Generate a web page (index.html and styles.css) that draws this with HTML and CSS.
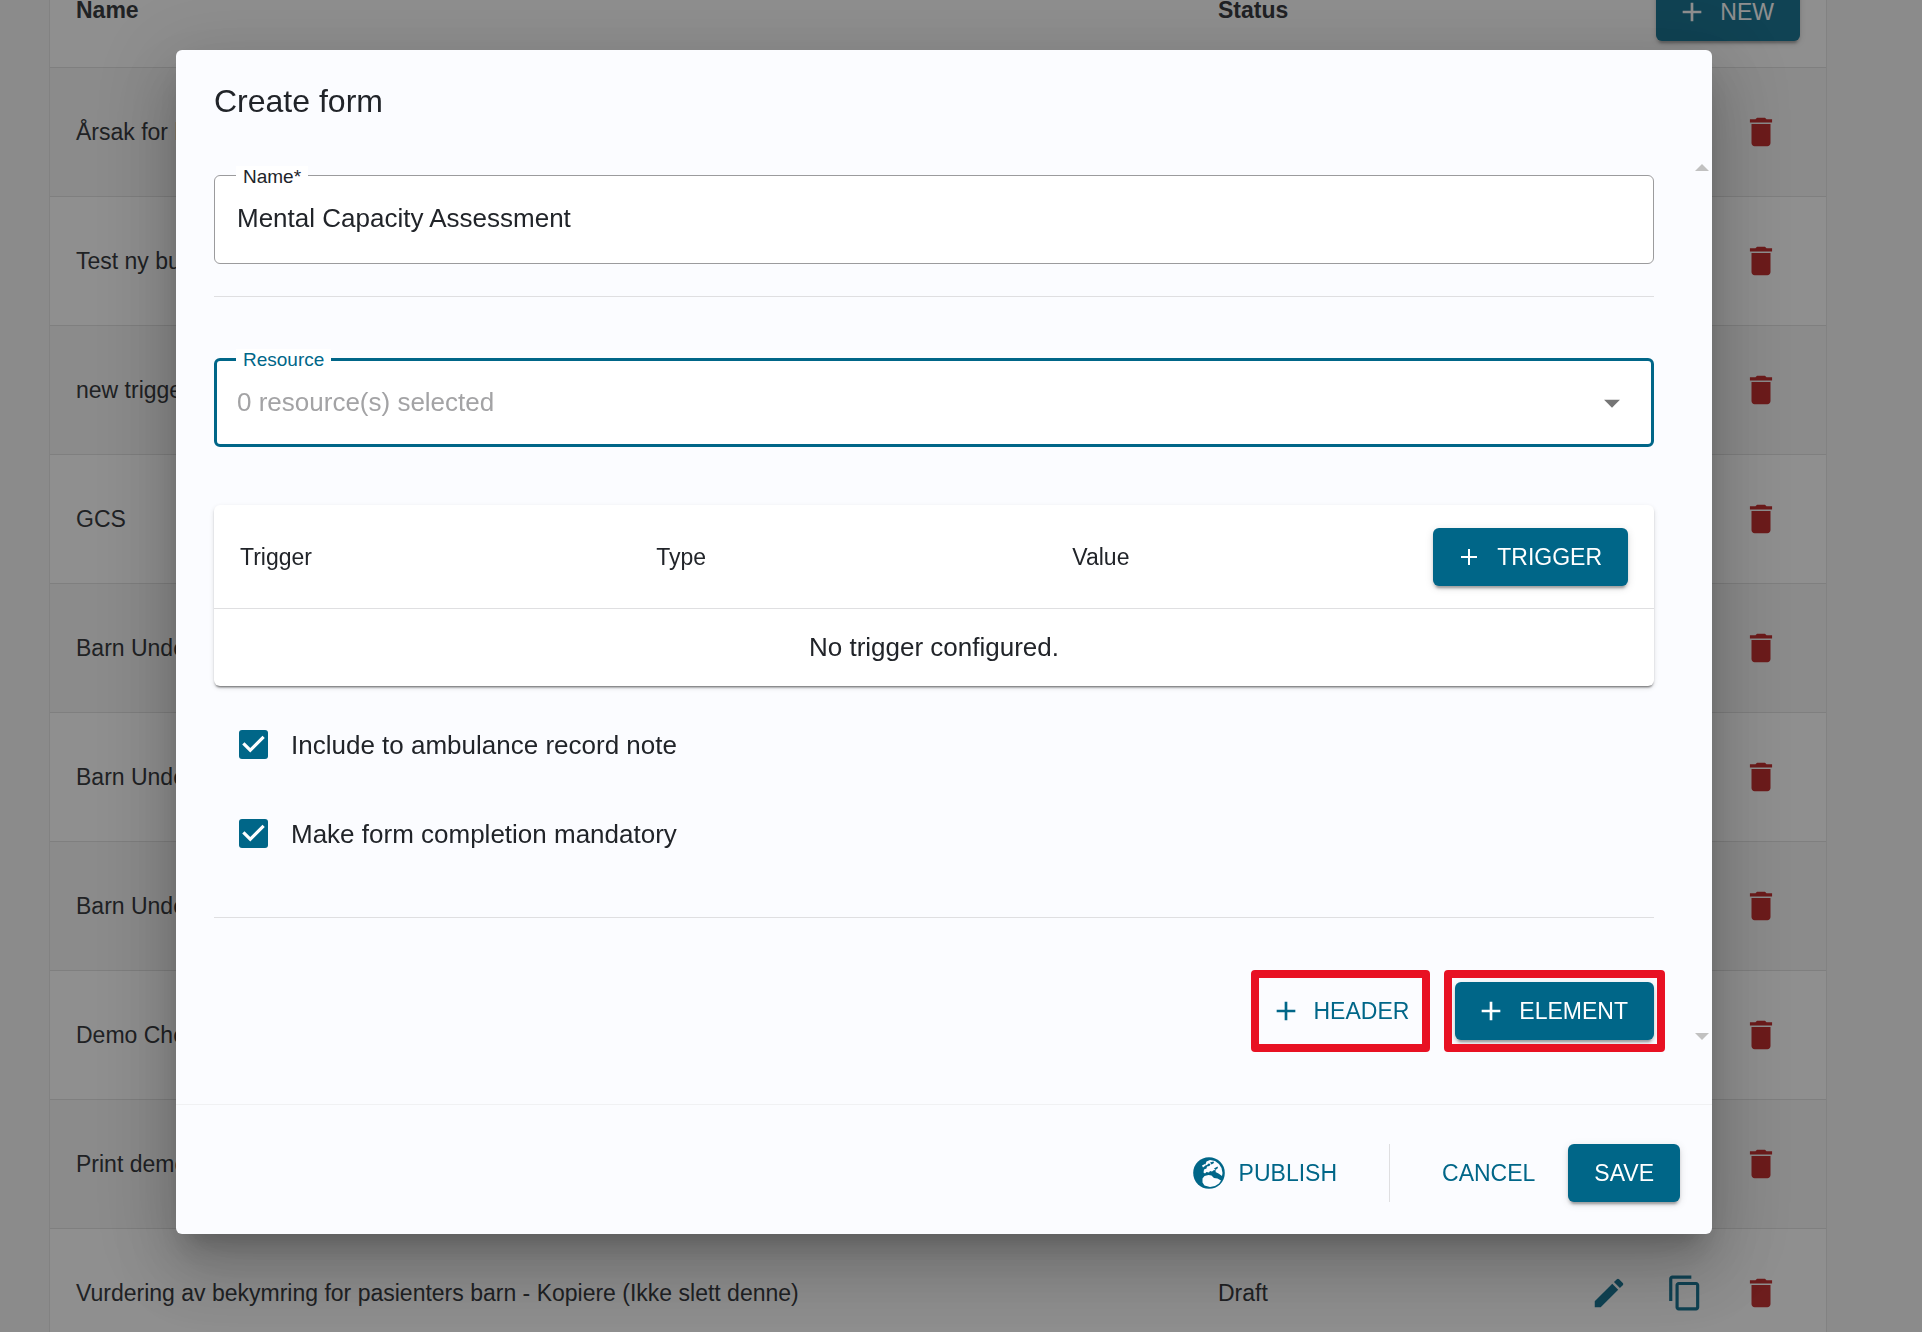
FILE: index.html
```html
<!DOCTYPE html>
<html lang="en">
<head>
<meta charset="utf-8">
<title>Create form</title>
<link rel="stylesheet" href="styles.css">
</head>
<body>
<svg class="sprite" aria-hidden="true">
  <symbol id="plus" viewBox="0 0 24 24"><path d="M19 13h-6v6h-2v-6H5v-2h6V5h2v6h6z"/></symbol>
  <symbol id="trash" viewBox="0 0 24 24"><path d="M6 19c0 1.100.9 2 2 2h8c1.100 0 2-.9 2-2V7H6zM19 4h-3.500l-1-1h-5l-1 1H5v2h14z"/></symbol>
  <symbol id="edit" viewBox="0 0 24 24"><path d="M3 17.250V21h3.750L17.810 9.940l-3.750-3.750zM20.710 7.040c.39-.39.39-1.020 0-1.410l-2.340-2.340a.996.996 0 0 0-1.410 0l-1.830 1.830 3.750 3.750z"/></symbol>
  <symbol id="copy" viewBox="0 0 24 24"><path d="M16 1H4c-1.100 0-2 .9-2 2v14h2V3h12zm3 4H8c-1.100 0-2 .9-2 2v14c0 1.100.9 2 2 2h11c1.100 0 2-.9 2-2V7c0-1.100-.9-2-2-2m0 16H8V7h11z"/></symbol>
</svg>

<main class="page">
  <table class="forms">
    <colgroup><col class="col-name"><col class="col-status"><col></colgroup>
    <thead>
      <tr><th scope="col">Name</th><th scope="col">Status</th>
      <th class="cell-new"><button class="btn btn-filled" type="button"><svg class="icon-plus"><use href="#plus"/></svg>NEW</button></th></tr>
    </thead>
    <tbody>
      <tr><td>Årsak for hendelse</td><td></td><td><div class="actions"><button type="button" class="icon-btn danger" aria-label="Delete"><svg><use href="#trash"/></svg></button></div></td></tr>
      <tr><td>Test ny build</td><td></td><td><div class="actions"><button type="button" class="icon-btn danger" aria-label="Delete"><svg><use href="#trash"/></svg></button></div></td></tr>
      <tr><td>new trigger</td><td></td><td><div class="actions"><button type="button" class="icon-btn danger" aria-label="Delete"><svg><use href="#trash"/></svg></button></div></td></tr>
      <tr><td>GCS</td><td></td><td><div class="actions"><button type="button" class="icon-btn danger" aria-label="Delete"><svg><use href="#trash"/></svg></button></div></td></tr>
      <tr><td>Barn Undersøkelse</td><td></td><td><div class="actions"><button type="button" class="icon-btn danger" aria-label="Delete"><svg><use href="#trash"/></svg></button></div></td></tr>
      <tr><td>Barn Undersøkelse</td><td></td><td><div class="actions"><button type="button" class="icon-btn danger" aria-label="Delete"><svg><use href="#trash"/></svg></button></div></td></tr>
      <tr><td>Barn Undersøkelse</td><td></td><td><div class="actions"><button type="button" class="icon-btn danger" aria-label="Delete"><svg><use href="#trash"/></svg></button></div></td></tr>
      <tr><td>Demo Checklist</td><td></td><td><div class="actions"><button type="button" class="icon-btn danger" aria-label="Delete"><svg><use href="#trash"/></svg></button></div></td></tr>
      <tr><td>Print demo</td><td></td><td><div class="actions"><button type="button" class="icon-btn danger" aria-label="Delete"><svg><use href="#trash"/></svg></button></div></td></tr>
      <tr><td>Vurdering av bekymring for pasienters barn - Kopiere (Ikke slett denne)</td><td>Draft</td><td><div class="actions"><button type="button" class="icon-btn" aria-label="Edit"><svg><use href="#edit"/></svg></button><button type="button" class="icon-btn" aria-label="Copy"><svg><use href="#copy"/></svg></button><button type="button" class="icon-btn danger" aria-label="Delete"><svg><use href="#trash"/></svg></button></div></td></tr>
    </tbody>
  </table>
</main>

<div class="backdrop">
  <section class="dialog" role="dialog" aria-modal="true" aria-labelledby="dialog-title">
    <h1 class="dialog-title" id="dialog-title">Create form</h1>
    <div class="scroll-area">
      <form class="dialog-content">
        <div class="field">
          <label for="name">Name*</label>
          <input id="name" type="text" value="Mental Capacity Assessment">
        </div>
        <hr class="divider divider-top">
        <div class="field field-active">
          <label for="resource">Resource</label>
          <select id="resource"><option>0 resource(s) selected</option></select>
          <svg class="caret" viewBox="0 0 24 24" aria-hidden="true"><path d="M7 10l5 5 5-5z"/></svg>
        </div>
        <table class="triggers">
          <colgroup><col class="col-trigger"><col class="col-trigger"><col></colgroup>
          <thead>
            <tr><th scope="col">Trigger</th><th scope="col">Type</th>
            <th scope="col"><div class="value-head">Value<button class="btn btn-filled" type="button"><svg class="icon-plus" viewBox="0 0 32 32"><path d="M24 17h-7v7h-2v-7H8v-2h7V8h2v7h7z"/></svg>TRIGGER</button></div></th></tr>
          </thead>
          <tbody><tr><td colspan="3">No trigger configured.</td></tr></tbody>
        </table>
        <div class="checks">
          <label class="check"><input type="checkbox" checked>Include to ambulance record note</label>
          <label class="check"><input type="checkbox" checked>Make form completion mandatory</label>
        </div>
        <hr class="divider">
        <div class="add-row">
          <div class="marked"><button class="btn btn-compact" type="button"><svg class="icon-plus"><use href="#plus"/></svg>HEADER</button></div>
          <div class="marked"><button class="btn btn-filled" type="button"><svg class="icon-plus"><use href="#plus"/></svg>ELEMENT</button></div>
        </div>
      </form>
      <div class="scrollbar" aria-hidden="true">
        <svg viewBox="0 0 14 7"><path d="M7 0l7 7H0z"/></svg>
        <svg viewBox="0 0 14 7"><path d="M7 7l7-7H0z"/></svg>
      </div>
    </div>
    <footer class="dialog-footer">
      <button class="btn btn-text btn-publish" type="button"><svg class="icon-globe" viewBox="0 0 32 32"><circle cx="16" cy="16" r="15.800"/><path class="land" d="M13.500 4.500l3.500-1.500 5 1 4 3 2.500 4 1 5-.5 3-3.500-2.500-3-1.500.5-1.500-2-.5-2 1.500-2-.5-1 1.500-2.500-.5-1.500 1.500-1.500-1 .5-3 2.500-1 .5-2 2.500-.5 1-2-2-.5-1.500 1.500-2 .5zM9 8.500l3-1.500.5 1.500-2.500 2zM9.500 21.500l2-2.500 4-1 3 .5 2.500 2.500 3.500.5 3.500 2-2 3-4 2.500-5 1-5.500-1.500-2-3z"/><path d="M17 5.500l3.500-1 .5 1.500-2.500 1.500zM21 11.500l3.500-2 .5 1.500-2.500 2z"/></svg>PUBLISH</button>
      <span class="separator"></span>
      <button class="btn btn-text" type="button">CANCEL</button>
      <button class="btn btn-filled btn-save" type="button">SAVE</button>
    </footer>
  </section>
</div>
</body>
</html>
```
FILE: styles.css
```css
:root {
  --primary: #006688;
  --text: #212429;
  --line: #dfdfe1;
  --surface: #fbfcff;
}

* { box-sizing: border-box; }

body {
  margin: 0;
  height: 100vh;
  overflow: hidden;
  background: #f7f7f7;
  color: var(--text);
  font-family: "Liberation Sans", Arial, sans-serif;
  font-size: 23px;
  line-height: 32px;
}

.sprite { display: none; }
svg { fill: currentColor; flex: none; }

button, input, select { font: inherit; color: inherit; }

/* Buttons */
.btn {
  display: inline-flex;
  align-items: center;
  gap: 12px;
  height: 58px;
  padding: 0 26px 0 20px;
  border: 0;
  border-radius: 6px;
  background: none;
  color: var(--primary);
}
.btn-filled {
  background: var(--primary);
  color: #fff;
  box-shadow: 0 5px 2px -3px rgba(0, 0, 0, .2), 0 3px 3px rgba(0, 0, 0, .14), 0 2px 8px rgba(0, 0, 0, .12);
}
.btn-compact { padding: 0 10px 0 8px; }
.btn-text { padding: 0 13px; }
.btn-publish { gap: 14px; }
.btn-save { padding: 0 26px; }
.icon-plus, .icon-globe { width: 32px; height: 32px; }
.icon-globe .land { fill: var(--surface); }

.icon-btn {
  display: flex;
  padding: 13px;
  border: 0;
  background: none;
  color: var(--primary);
}
.icon-btn svg { width: 38px; height: 38px; }
.icon-btn.danger { color: #ba1a1a; }

/* Page behind the dialog, scrolled slightly past the table top */
.page { margin: -42px 95px 0 49px; }
.forms {
  width: 100%;
  table-layout: fixed;
  border-collapse: separate;
  border-spacing: 0;
  border: 1px solid #e4e4e4;
  background: #fff;
}
.col-name { width: 64.3%; }
.col-status { width: 15%; }
.forms th, .forms td {
  height: 129px;
  padding: 0 26px;
  border-bottom: 1px solid #dedede;
  text-align: left;
}
.forms th { height: 109px; padding-bottom: 6px; font-weight: 700; }
.forms th.cell-new { padding-bottom: 3px; text-align: right; font-weight: 400; }
.forms tbody tr:nth-child(odd) { background: #f7f7f7; }
.actions { display: flex; justify-content: flex-end; gap: 12px; padding-right: 7px; }

/* Dialog */
.backdrop {
  position: fixed;
  inset: 0;
  display: flex;
  justify-content: center;
  align-items: flex-start;
  padding: 50px 34px 0 0;
  background: rgba(32, 32, 32, .5);
}
.dialog {
  width: 100%;
  max-width: 1536px;
  border-radius: 6px;
  background: var(--surface);
  box-shadow: 0 18px 24px -11px rgba(0, 0, 0, .2), 0 38px 61px 5px rgba(0, 0, 0, .14), 0 14px 74px 13px rgba(0, 0, 0, .12);
}
.dialog-title {
  margin: 0;
  padding: 26px 38px 30px;
  font-size: 32px;
  font-weight: 400;
  line-height: 50px;
}
.scroll-area { display: flex; margin-bottom: 56px; }
.dialog-content { flex: 1; padding: 19px 38px 8px; }
.scrollbar {
  display: flex;
  flex-direction: column;
  justify-content: space-between;
  align-items: center;
  width: 20px;
  padding: 8px 0;
  color: #c1c1c1;
}
.scrollbar svg { width: 14px; height: 7px; }

.field {
  position: relative;
  height: 89px;
  border: 1px solid #9b9b9d;
  border-radius: 6px;
  background: #fff;
}
.field label {
  position: absolute;
  top: -10px;
  left: 21px;
  padding: 0 7px;
  background: #fff;
  font-size: 19px;
  line-height: 22px;
}
.field input, .field select {
  width: 100%;
  height: 100%;
  padding: 0 22px 2px;
  border: 0;
  outline: 0;
  background: none;
  font-size: 26px;
}
.field select { appearance: none; padding: 0 20px 2px; color: #a3a3a5; opacity: 1; }
.field-active { border: 3px solid var(--primary); }
.field-active label { top: -12px; left: 19px; color: var(--primary); }
.caret {
  position: absolute;
  top: 23px;
  right: 20px;
  width: 38px;
  height: 38px;
  color: #757575;
  pointer-events: none;
}

.divider { margin: 0; border: 0; border-top: 1px solid var(--line); }
.divider-top { margin: 32px 0 61px; }

.triggers {
  width: 100%;
  margin-top: 58px;
  table-layout: fixed;
  border-spacing: 0;
  border-radius: 6px;
  background: #fff;
  box-shadow: 0 3px 2px -2px rgba(0, 0, 0, .4), 0 2px 2px rgba(0, 0, 0, .14), 0 2px 5px rgba(0, 0, 0, .12);
}
.col-trigger { width: 28.9%; }
.triggers th {
  height: 104px;
  padding: 0 26px;
  border-bottom: 1px solid var(--line);
  font-weight: 400;
  text-align: left;
}
.triggers td { height: 77px; padding: 0 0 2px; font-size: 26px; text-align: center; }
.value-head { display: flex; align-items: center; justify-content: space-between; }

.checks {
  display: flex;
  flex-direction: column;
  gap: 22px;
  padding: 25px 0 50px 25px;
}
.check { display: flex; align-items: center; gap: 23px; height: 67px; font-size: 26px; }
.check input {
  appearance: none;
  width: 29px;
  height: 29px;
  margin: 0;
  border-radius: 3px;
  background: var(--primary) url("data:image/svg+xml,%3Csvg xmlns='http://www.w3.org/2000/svg' viewBox='3 3 18 18'%3E%3Cpath fill='%23fff' d='M10 17l-5-5 1.410-1.410L10 14.170l7.590-7.590L19 8z'/%3E%3C/svg%3E") center / 100%;
}

.add-row {
  display: flex;
  justify-content: flex-end;
  gap: 36px;
  padding-top: 64px;
}
.marked { position: relative; display: flex; }
.marked::after {
  content: "";
  position: absolute;
  inset: -12px -11px;
  border: 8px solid #e81123;
  border-radius: 4px;
  pointer-events: none;
}

.dialog-footer {
  display: flex;
  justify-content: flex-end;
  align-items: center;
  padding: 39px 32px 32px;
  border-top: 1px solid #f0f1f3;
}
.separator { width: 1px; height: 58px; margin: 0 39px; background: var(--line); }
.btn-save { margin-left: 20px; }
```
